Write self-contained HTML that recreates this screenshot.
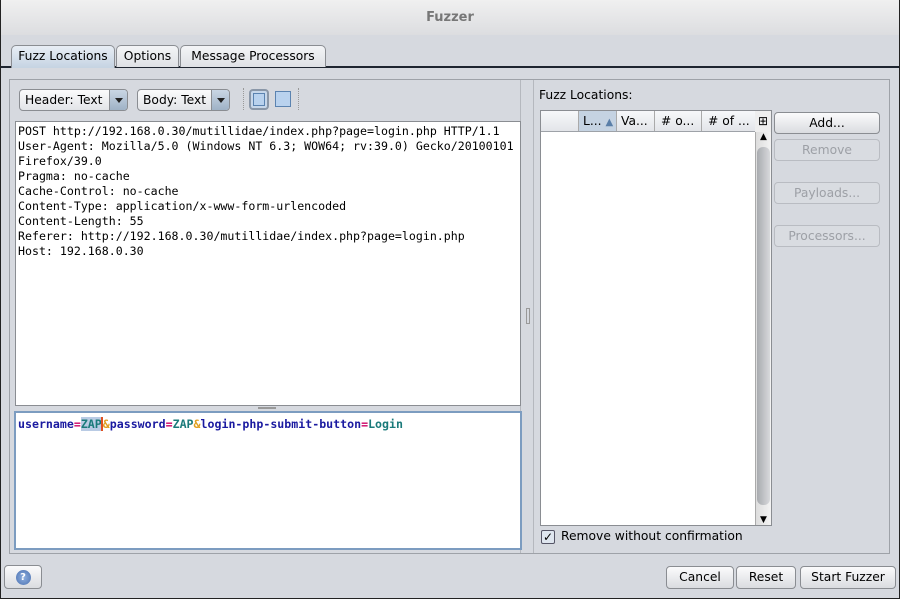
<!DOCTYPE html>
<html><head><style>
*{box-sizing:border-box;margin:0;padding:0}
body{width:900px;height:599px;background:#d6d9df;font-family:"DejaVu Sans","Liberation Sans",sans-serif;font-size:12.3px;color:#000;position:relative;overflow:hidden}
.a{position:absolute}
.title{left:0;top:0;width:900px;height:35px;background:linear-gradient(#f0f0f0,#dcdde0);color:#777;font-weight:bold;text-align:center;line-height:36px;font-size:13px}
.tab{top:45px;height:22px;border:1px solid #8a8d92;border-bottom:none;border-radius:5px 5px 0 0;background:linear-gradient(#f4f5f7,#dfe1e5);line-height:21px;text-align:center}
.btn{border:1px solid #8a8d92;border-radius:4px;background:linear-gradient(#fbfbfc,#dadce0);text-align:center;line-height:20px;height:22px}
.dis{border-color:#b9bcc2;color:#9da0a6;background:#d9dce1}
.mono{font-family:"DejaVu Sans Mono","Liberation Mono",monospace;font-size:11.6px;line-height:15px}
.combo{top:89px;height:22px;border:1px solid #8a8d92;border-radius:4px;background:linear-gradient(#fbfbfc,#e2e4e8);line-height:20px;padding-left:5px}
.arr{position:absolute;right:0;top:0;width:18px;height:20px;border-left:1px solid #8a8d92;background:linear-gradient(#c9d6e4,#9fb2c6);border-radius:0 3px 3px 0}
.arr:after{content:"";position:absolute;left:5px;top:8px;border:4px solid transparent;border-top:5px solid #222;border-bottom:none}
</style></head><body>
<div class="a title">Fuzzer</div>
<div class="a" style="left:0;top:66px;width:900px;height:2px;background:#1e2530"></div>
<div class="a tab" style="left:11px;width:104px;background:linear-gradient(#e8eef5,#c5d3e2);height:23px">Fuzz Locations</div>
<div class="a tab" style="left:116px;width:63px">Options</div>
<div class="a tab" style="left:180px;width:146px">Message Processors</div>
<div class="a" style="left:9px;top:79px;width:881px;height:475px;border:1px solid #9ea2a8"></div>
<div class="a" style="left:10px;top:80px;width:511px;height:473px;border-right:1px solid #b5b8be"></div>
<div class="a combo" style="left:19px;width:109px">Header: Text<div class="arr"></div></div>
<div class="a combo" style="left:137px;width:93px">Body: Text<div class="arr"></div></div>
<div class="a" style="left:243px;top:88px;width:1px;height:22px;border-left:1px dotted #999"></div>
<div class="a" style="left:249px;top:89px;width:20px;height:21px;border:2px solid #8a97a8;border-radius:4px;background:#c7d7ea"><div style="margin:2px;height:13px;border:1px solid #5b83b0;background:#b9d2ee"></div></div>
<div class="a" style="left:275px;top:91px;width:16px;height:16px;border:1px solid #5b83b0;background:#b9d2ee"></div>
<div class="a" style="left:298px;top:88px;width:1px;height:22px;border-left:1px dotted #999"></div>
<div class="a mono" style="left:15px;top:121px;width:506px;height:285px;background:#fff;border:1px solid #8a8d92;padding:2px 2px;white-space:pre">POST http://192.168.0.30/mutillidae/index.php?page=login.php HTTP/1.1
User-Agent: Mozilla/5.0 (Windows NT 6.3; WOW64; rv:39.0) Gecko/20100101
Firefox/39.0
Pragma: no-cache
Cache-Control: no-cache
Content-Type: application/x-www-form-urlencoded
Content-Length: 55
Referer: http://192.168.0.30/mutillidae/index.php?page=login.php
Host: 192.168.0.30</div>
<div class="a" style="left:258px;top:407px;width:18px;height:2px;background:#999"></div>
<div class="a mono" style="left:14px;top:411px;width:508px;height:139px;background:#fff;border:2px solid #7c9cc0;padding:4px 2px;font-weight:bold"><span style="color:#1a1aa0">username</span><span style="color:#c06">=</span><span style="color:#1a7a7a;background:#b9cbe4">ZAP</span><span style="border-left:2px solid #e05020;color:#e0a020;margin-left:-1px">&amp;</span><span style="color:#1a1aa0">password</span><span style="color:#c06">=</span><span style="color:#1a7a7a">ZAP</span><span style="color:#e0a020">&amp;</span><span style="color:#1a1aa0">login-php-submit-button</span><span style="color:#c06">=</span><span style="color:#1a7a7a">Login</span></div>
<div class="a" style="left:526px;top:308px;width:4px;height:16px;border:1px solid #999"></div>
<div class="a" style="left:533px;top:80px;width:357px;height:473px;border-left:1px solid #b5b8be"></div>
<div class="a" style="left:539px;top:88px">Fuzz Locations:</div>
<div class="a" style="left:540px;top:110px;width:232px;height:416px;background:#fff;border:1px solid #8a8d92"></div>
<div class="a" style="left:541px;top:111px;width:214px;height:21px;background:linear-gradient(#f7f8fa,#e3e5e9);border-bottom:1px solid #9ea2a8;line-height:20px">
<span class="a" style="left:37px;width:38px;height:20px;background:#c5d3e2;border-left:1px solid #aaa;padding-left:4px">L... <span style="color:#5a7fa8;font-size:10px">▲</span></span>
<span class="a" style="left:75px;width:38px;border-left:1px solid #aaa;padding-left:4px">Va...</span>
<span class="a" style="left:113px;width:47px;border-left:1px solid #aaa;padding-left:6px"># o...</span>
<span class="a" style="left:160px;width:54px;border-left:1px solid #aaa;padding-left:6px"># of ...</span></div>
<div class="a" style="left:755px;top:111px;width:16px;height:21px;background:#eee;font-size:12px;text-align:center;line-height:20px">⊞</div>
<div class="a" style="left:755px;top:132px;width:16px;height:393px;background:linear-gradient(90deg,#ddd,#f3f3f3);border-left:1px solid #aaa"><div style="font-size:9px;text-align:center">▲</div><div style="position:absolute;left:1px;top:15px;width:13px;height:358px;border-radius:6px;background:linear-gradient(90deg,#a8abaf,#d8d9dc)"></div><div style="position:absolute;bottom:0;width:15px;font-size:9px;text-align:center">▼</div></div>
<div class="a btn" style="left:774px;top:112px;width:106px">Add...</div>
<div class="a btn dis" style="left:774px;top:139px;width:106px">Remove</div>
<div class="a btn dis" style="left:774px;top:182px;width:106px">Payloads...</div>
<div class="a btn dis" style="left:774px;top:225px;width:106px">Processors...</div>
<div class="a" style="left:541px;top:530px;width:14px;height:14px;border:1px solid #556;border-radius:2px;background:#dfe6ef;font-size:12px;line-height:12px;text-align:center;font-weight:bold">✓</div>
<div class="a" style="left:561px;top:529px">Remove without confirmation</div>
<div class="a btn" style="left:4px;top:565px;width:38px;height:24px"><div style="margin:4px auto;width:15px;height:15px;border-radius:50%;background:radial-gradient(#8fb0e0,#4a70b0);color:#fff;font-size:10px;line-height:15px;font-weight:bold">?</div></div>
<div class="a btn" style="left:666px;top:566px;width:68px;height:23px">Cancel</div>
<div class="a btn" style="left:736px;top:566px;width:60px;height:23px">Reset</div>
<div class="a btn" style="left:800px;top:566px;width:96px;height:23px">Start Fuzzer</div>
<div class="a" style="left:0;top:0;width:900px;height:599px;border:1px solid #222;border-top:none"></div>
</body></html>
